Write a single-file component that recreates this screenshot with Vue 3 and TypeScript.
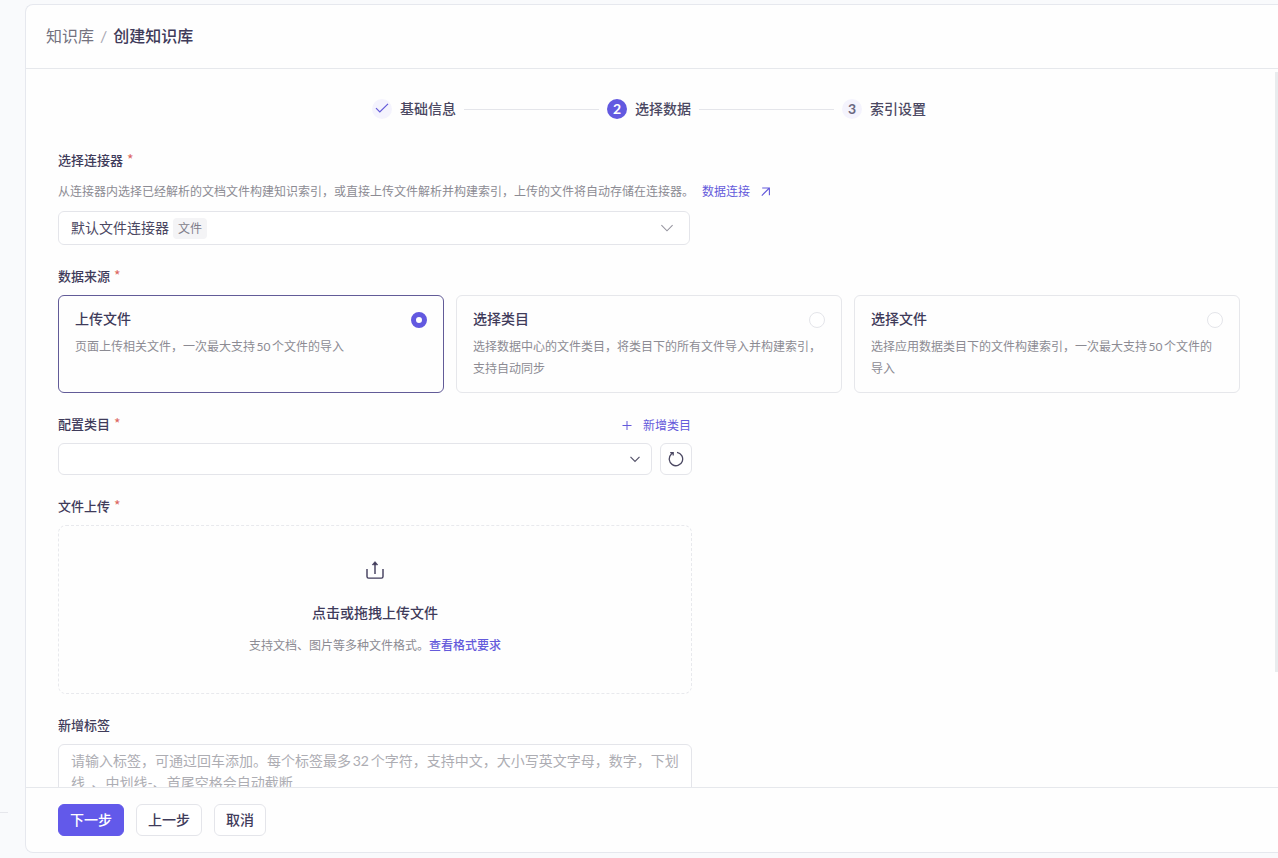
<script setup lang="ts">
import { ref } from 'vue'

interface Step {
  title: string
  state: 'done' | 'active' | 'wait'
}

interface Source {
  value: string
  title: string
  desc: string
}

const steps: Step[] = [
  { title: '基础信息', state: 'done' },
  { title: '选择数据', state: 'active' },
  { title: '索引设置', state: 'wait' },
]

const sources: Source[] = [
  { value: 'upload', title: '上传文件', desc: '页面上传相关文件，一次最大支持50个文件的导入' },
  { value: 'category', title: '选择类目', desc: '选择数据中心的文件类目，将类目下的所有文件导入并构建索引，支持自动同步' },
  { value: 'file', title: '选择文件', desc: '选择应用数据类目下的文件构建索引，一次最大支持50个文件的导入' },
]

const connector = ref('default')
const source = ref('upload')
const category = ref('')
const tags = ref('')
</script>

<template>
  <div class="page">
    <aside class="rail"><hr class="rail-line" /></aside>

    <main class="panel">
      <header class="header">
        <nav class="crumbs">
          <a href="#" class="crumb">知识库</a>
          <span class="slash">/</span>
          <span class="crumb current">创建知识库</span>
        </nav>
      </header>

      <div class="viewport">
        <form class="content">
          <ol class="steps">
            <li v-for="(step, i) in steps" :key="step.title" class="step">
              <span class="dot" :class="step.state">
                <svg v-if="step.state === 'done'" width="14" height="14" viewBox="0 0 14 14" fill="none" stroke="currentColor" stroke-width="1.2">
                  <path d="M1 6.2 4.8 10 13 1.8" />
                </svg>
                <template v-else>{{ i + 1 }}</template>
              </span>
              <span class="step-title">{{ step.title }}</span>
            </li>
          </ol>

          <section class="field">
            <label class="label" for="connector">选择连接器<span class="star">*</span></label>
            <p class="hint">
              <span>从连接器内选择已经解析的文档文件构建知识索引，或直接上传文件解析并构建索引，上传的文件将自动存储在连接器。</span>
              <a href="#" class="link">
                数据连接
                <svg width="10" height="10" viewBox="0 0 10 10" fill="none" stroke="currentColor" stroke-width="1.1">
                  <path d="M0.8 8.6 8.4 1M1.2 1H8.4V8.2" />
                </svg>
              </a>
            </p>
            <div class="select-box connector">
              <select id="connector" v-model="connector" class="control">
                <option value="default">默认文件连接器</option>
              </select>
              <span class="tag">文件</span>
              <svg class="chevron light" width="14" height="14" viewBox="0 0 14 14" fill="none" stroke="currentColor" stroke-width="1.1">
                <path d="M1.4 4.2 7 9.8 12.6 4.2" />
              </svg>
            </div>
          </section>

          <fieldset class="field">
            <legend class="label">数据来源<span class="star">*</span></legend>
            <div class="cards">
              <label v-for="item in sources" :key="item.value" class="card" :class="{ checked: source === item.value }">
                <span class="card-head">
                  <span class="card-title">{{ item.title }}</span>
                  <input v-model="source" class="radio" type="radio" name="source" :value="item.value" />
                </span>
                <span class="card-desc">{{ item.desc }}</span>
              </label>
            </div>
          </fieldset>

          <section class="field narrow">
            <div class="label-row">
              <label class="label" for="category">配置类目<span class="star">*</span></label>
              <button type="button" class="text-button">
                <svg width="10" height="10" viewBox="0 0 10 10" fill="none" stroke="currentColor">
                  <path d="M5 0V9M0.5 4.5H9.5" />
                </svg>
                新增类目
              </button>
            </div>
            <div class="category-row">
              <div class="select-box">
                <select id="category" v-model="category" class="control">
                  <option value=""></option>
                </select>
                <svg class="chevron" width="10" height="10" viewBox="0 0 10 10" fill="none" stroke="currentColor" stroke-width="1.2">
                  <path d="M0.5 2.8 5 7.3 9.5 2.8" />
                </svg>
              </div>
              <button type="button" class="icon-button" aria-label="刷新">
                <svg width="16" height="16" viewBox="0 0 16 16" fill="none" stroke="currentColor" stroke-width="1.3">
                  <path d="M9 1.4A6.7 6.7 0 1 1 3.2 3.3L5 1.8M2.2 1.6H5.2V4.6" />
                </svg>
              </button>
            </div>
          </section>

          <section class="field narrow">
            <span id="upload-label" class="label">文件上传<span class="star">*</span></span>
            <div class="upload" role="group" aria-labelledby="upload-label">
              <button type="button" class="upload-button">
                <svg width="20" height="20" viewBox="0 0 20 20" fill="none" stroke="currentColor" stroke-width="1.4">
                  <path d="M2 9V16.5A1.6 1.6 0 0 0 3.6 18.1H16.4A1.6 1.6 0 0 0 18 16.5V9M10 14V3" />
                  <path d="M10 1.6 12.8 4.8H7.2Z" fill="currentColor" stroke-width="0.6" stroke-linejoin="round" />
                </svg>
                点击或拖拽上传文件
              </button>
              <p class="upload-hint">支持文档、图片等多种文件格式。<a href="#" class="format-link">查看格式要求</a></p>
            </div>
          </section>

          <section class="field narrow">
            <label class="label" for="tags">新增标签</label>
            <textarea
              id="tags"
              v-model="tags"
              class="textarea"
              rows="4"
              placeholder="请输入标签，可通过回车添加。每个标签最多32个字符，支持中文，大小写英文字母，数字，下划线_、中划线-、首尾空格会自动截断"
            ></textarea>
          </section>
        </form>
        <div class="thumb"></div>
      </div>

      <footer class="footer">
        <button type="button" class="button primary">下一步</button>
        <button type="button" class="button">上一步</button>
        <button type="button" class="button">取消</button>
      </footer>
    </main>
  </div>
</template>

<style>
body {
  margin: 0;
  background: #f9fafc;
}
</style>

<style scoped>
* {
  box-sizing: border-box;
}

.page {
  display: grid;
  grid-template-columns: 25px minmax(0, 1fr);
  height: 100vh;
  padding: 4px 0 5px;
  background: #f9fafc;
  color: #4b4862;
  font-family: Lato, "Noto Sans CJK SC", sans-serif;
  font-size: 14px;
  line-height: 22px;
  text-autospace: normal;
}

button,
select,
textarea {
  margin: 0;
  color: inherit;
  font: inherit;
}

button {
  cursor: pointer;
}

a {
  text-decoration: none;
}

.rail {
  display: flex;
  flex-direction: column;
  justify-content: flex-end;
  padding-bottom: 40px;
}

.rail-line {
  width: 8px;
  height: 1px;
  margin: 0;
  border: 0;
  background: #e6e7ec;
}

.panel {
  display: flex;
  flex-direction: column;
  min-height: 0;
  border: 1px solid #e6e8ee;
  border-right: 0;
  border-radius: 8px 0 0 8px;
  background: #fefefe;
  overflow: hidden;
}

.header {
  flex: none;
  display: flex;
  align-items: center;
  height: 64px;
  padding: 0 20px 2px;
  border-bottom: 1px solid #e6e8ec;
}

.crumbs {
  display: flex;
  align-items: center;
  gap: 6px;
  font-size: 16px;
  line-height: 24px;
}

.crumb {
  color: #74727f;
}

.slash {
  color: #a9a8b3;
}

.crumb.current {
  color: #3f3b5a;
  font-weight: 500;
}

.viewport {
  position: relative;
  flex: 1;
  min-height: 0;
}

.content {
  height: 100%;
  padding: 29px 38px 24px 32px;
  overflow-y: auto;
  scrollbar-width: none;
}

.thumb {
  position: absolute;
  top: 3px;
  right: 0;
  width: 3px;
  height: calc(84% - 3px);
  background: #e9ecee;
}

.steps {
  display: flex;
  justify-content: center;
  gap: 8px;
  margin: 0 0 30px;
  padding: 0;
  list-style: none;
}

.step {
  display: flex;
  align-items: center;
  gap: 8px;
  font-weight: 500;
}

.step:not(:last-child)::after {
  content: "";
  width: 135px;
  height: 1px;
  background: #e4e5ea;
}

.dot {
  display: grid;
  place-items: center;
  width: 20px;
  height: 20px;
  border-radius: 50%;
  background: #f4f3fd;
  color: #6a6880;
  font-size: 14px;
  font-weight: 700;
  line-height: 20px;
}

.dot.done {
  color: #6259d8;
}

.dot.active {
  background: #6259e0;
  color: #fff;
}

.field {
  margin: 0 0 21px;
  padding: 0;
  border: 0;
  min-width: 0;
}

.narrow {
  max-width: 634px;
}

.label {
  display: block;
  margin-bottom: 9px;
  padding: 0;
  color: #3f3b5a;
  font-size: 13px;
  font-weight: 500;
  line-height: 20px;
}

.star {
  margin-left: 4px;
  color: #dc6560;
  font-family: "Noto Sans CJK SC", sans-serif;
  font-size: 14px;
  font-weight: 400;
  line-height: 14px;
}

.hint {
  display: flex;
  align-items: center;
  gap: 8px;
  margin: 0 0 7px;
  color: #8c8b93;
  font-size: 12px;
  line-height: 25px;
}

.link {
  display: flex;
  align-items: center;
  gap: 11px;
  color: #645adb;
}

.select-box {
  position: relative;
  flex: 1;
}

.connector {
  max-width: 632px;
}

.control {
  display: block;
  width: 100%;
  height: 32px;
  padding: 0 36px 0 12px;
  border: 1px solid #e4e5ea;
  border-radius: 6px;
  background: #fff;
  appearance: none;
}

.connector .control {
  height: 34px;
}

.tag {
  position: absolute;
  top: 7px;
  left: 115px;
  padding: 1px 5px 0;
  border-radius: 4px;
  background: #f4f4f6;
  color: #7f7d8a;
  font-size: 12px;
  line-height: 20px;
  pointer-events: none;
}

.chevron {
  position: absolute;
  top: 0;
  right: 12px;
  bottom: 0;
  margin: auto 0;
  color: #55536a;
  pointer-events: none;
}

.chevron.light {
  right: 16px;
  color: #96959f;
}

.cards {
  display: grid;
  grid-template-columns: repeat(3, minmax(0, 1fr));
  gap: 12px;
}

.card {
  display: flex;
  flex-direction: column;
  gap: 6px;
  min-height: 98px;
  padding: 12px 16px;
  border: 1px solid #e6e7eb;
  border-radius: 6px;
  background: #fefefe;
  cursor: pointer;
}

.card.checked {
  border-color: #625b98;
}

.card-head {
  display: flex;
  align-items: center;
  justify-content: space-between;
}

.card-title {
  color: #3f3b5a;
  font-weight: 500;
}

.card-desc {
  color: #8c8b93;
  font-size: 12px;
}

.radio {
  width: 16px;
  height: 16px;
  margin: 2px 0 0;
  border: 1px solid #e4e5ea;
  border-radius: 50%;
  background: #fff;
  appearance: none;
}

.radio:checked {
  border: 5px solid #6259e0;
}

.label-row {
  display: flex;
  justify-content: space-between;
}

.text-button {
  display: flex;
  align-items: center;
  gap: 11px;
  height: 23px;
  padding: 0 1px 0 0;
  border: 0;
  background: none;
  color: #645adb;
  font-size: 12px;
}

.category-row {
  display: flex;
  gap: 8px;
}

.icon-button {
  display: grid;
  place-items: center;
  width: 32px;
  height: 32px;
  padding: 0;
  border: 1px solid #e4e5ea;
  border-radius: 6px;
  background: #fff;
}

.upload {
  display: flex;
  flex-direction: column;
  align-items: center;
  gap: 11px;
  padding: 34px 16px 36px;
  border: 1px dashed #e8e9ed;
  border-radius: 8px;
}

.upload-button {
  display: flex;
  flex-direction: column;
  align-items: center;
  gap: 22px;
  padding: 0;
  border: 0;
  background: none;
  color: #3f3b5a;
  font-weight: 500;
}

.upload-hint {
  margin: 0;
  color: #8c8b93;
  font-size: 12px;
}

.format-link {
  color: #645adb;
  font-weight: 500;
}

.textarea {
  display: block;
  width: 100%;
  padding: 5px 12px;
  border: 1px solid #e4e5ea;
  border-radius: 6px;
  background: #fff;
  resize: none;
}

.textarea::placeholder {
  color: #adadb3;
}

.footer {
  flex: none;
  display: flex;
  align-items: center;
  gap: 12px;
  height: 65px;
  padding: 0 32px;
  border-top: 1px solid #e6e8ec;
}

.button {
  height: 32px;
  padding: 0 11px;
  border: 1px solid #e4e5ea;
  border-radius: 6px;
  background: #fff;
  color: #3f3b5a;
  font-weight: 500;
}

.button.primary {
  border-color: #6259ea;
  background: #6259ea;
  color: #fff;
}
</style>
